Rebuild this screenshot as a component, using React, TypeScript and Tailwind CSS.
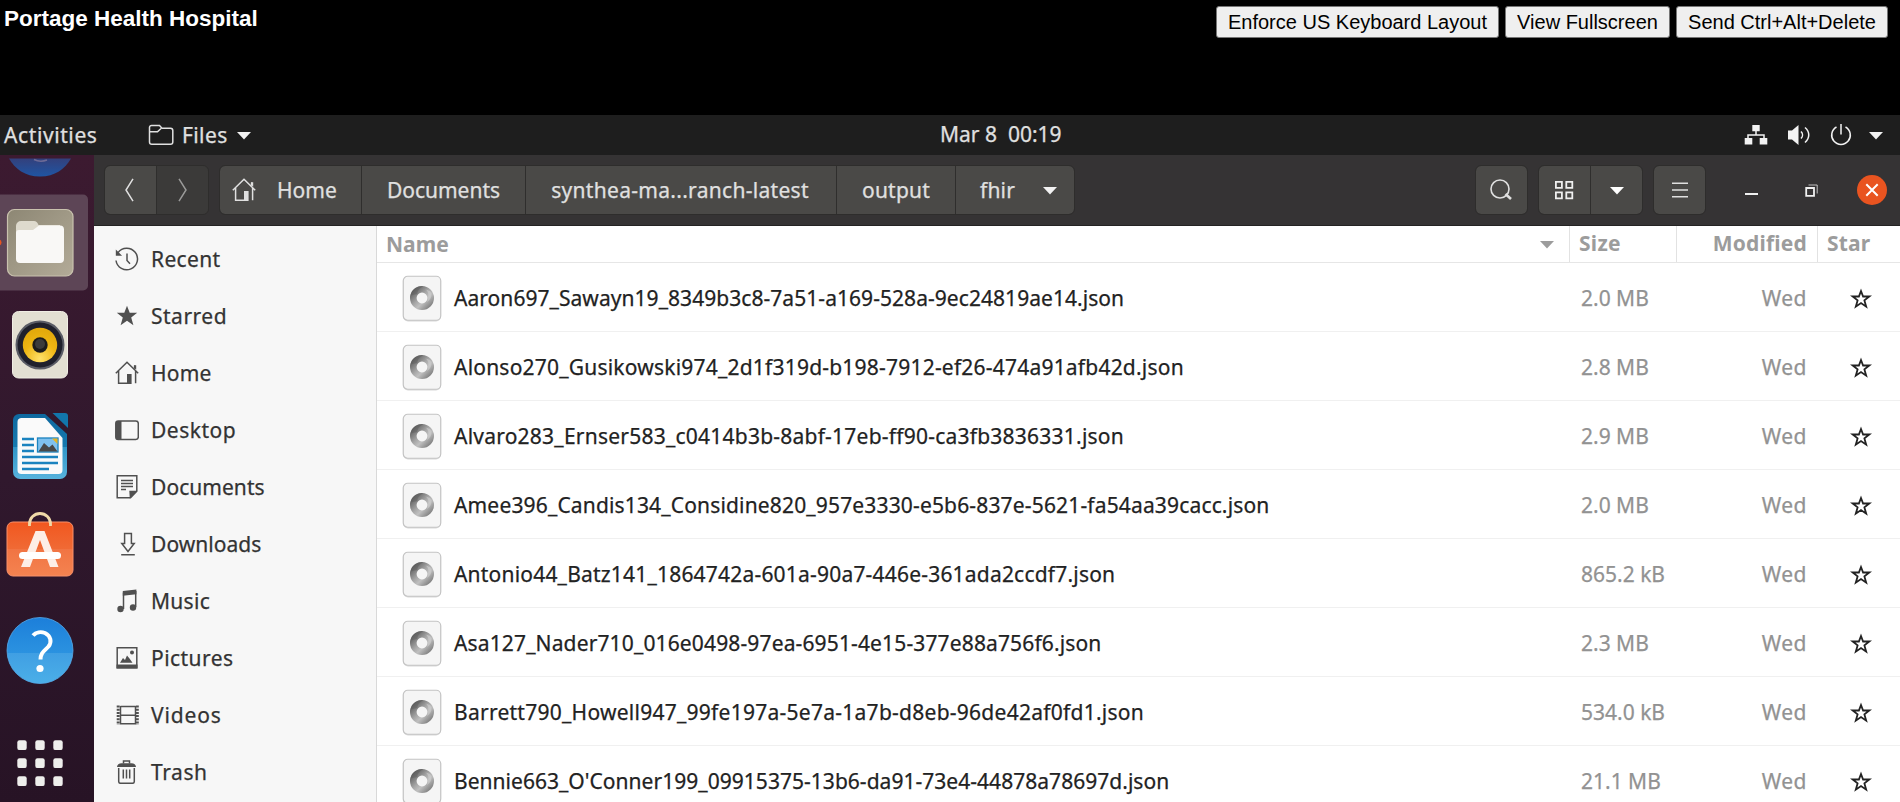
import React from "react";

const files = [
  { name: "Aaron697_Sawayn19_8349b3c8-7a51-a169-528a-9ec24819ae14.json", size: "2.0 MB", track: "tracking-[0.05px]" },
  { name: "Alonso270_Gusikowski974_2d1f319d-b198-7912-ef26-474a91afb42d.json", size: "2.8 MB", track: "tracking-[0.21px]" },
  { name: "Alvaro283_Ernser583_c0414b3b-8abf-17eb-ff90-ca3fb3836331.json", size: "2.9 MB", track: "tracking-[0.23px]" },
  { name: "Amee396_Candis134_Considine820_957e3330-e5b6-837e-5621-fa54aa39cacc.json", size: "2.0 MB", track: "tracking-[0.16px]" },
  { name: "Antonio44_Batz141_1864742a-601a-90a7-446e-361ada2ccdf7.json", size: "865.2 kB", track: "tracking-[0.2px]" },
  { name: "Asa127_Nader710_016e0498-97ea-6951-4e15-377e88a756f6.json", size: "2.3 MB", track: "tracking-[0.14px]" },
  { name: "Barrett790_Howell947_99fe197a-5e7a-1a7b-d8eb-96de42af0fd1.json", size: "534.0 kB", track: "tracking-[0.26px]" },
  { name: "Bennie663_O'Conner199_09915375-13b6-da91-73e4-44878a78697d.json", size: "21.1 MB", track: "tracking-[0.03px]" },
];

const Caret = ({ className = "" }: { className?: string }) => (
  <svg width="16" height="9" viewBox="0 0 16 9" className={className}>
    <path d="M1 1h14L8 8.4z" fill="currentColor" />
  </svg>
);

const HomeIcon = () => (
  <svg width="24" height="24" viewBox="0 0 24 24" fill="none" stroke="currentColor" strokeWidth="1.5">
    <path d="M.8 12.2 12 1.2l11.2 11M3.6 10v12.3h10M20.6 9.8v12.4M19.6 4.5v3" />
    <path d="M12 13h4.6v10H12z" fill="currentColor" stroke="none" />
    <path d="M19 4.2h2.2v4.6L19 6.8z" fill="currentColor" stroke="none" />
  </svg>
);

const places: { label: string; track: string; icon: React.ReactNode }[] = [
  {
    label: "Recent",
    track: "tracking-[0.35px]",
    icon: (
      <svg width="24" height="24" viewBox="0 0 24 24" fill="none" stroke="currentColor" strokeWidth="1.5">
        <path d="M3 5.6A10.8 10.8 0 1 1 1 13.5M12 6.5v7l3 3.2" />
        <path d="M.8 2.5v6.3h6.3z" fill="currentColor" stroke="none" />
      </svg>
    ),
  },
  {
    label: "Starred",
    track: "tracking-[0.5px]",
    icon: (
      <svg width="24" height="24" viewBox="0 0 24 24" fill="currentColor">
        <path d="m12 1.8 2.7 7h7.5l-6 4.700 2.200 7.700L12 16.800l-6.400 4.400 2.200-7.700-6-4.700h7.500z" />
      </svg>
    ),
  },
  { label: "Home", track: "tracking-[0.2px]", icon: <HomeIcon /> },
  {
    label: "Desktop",
    track: "tracking-[0.5px]",
    icon: (
      <svg width="24" height="24" viewBox="0 0 24 24" fill="none" stroke="currentColor" strokeWidth="1.5">
        <rect x=".8" y="3" width="22.5" height="18.5" rx="2.5" />
        <path d="M3 3h3.5v18.5H3A2 2 0 0 1 .8 19.500V5A2 2 0 0 1 3 3z" fill="currentColor" stroke="none" />
      </svg>
    ),
  },
  {
    label: "Documents",
    track: "tracking-[0.05px]",
    icon: (
      <svg width="24" height="24" viewBox="0 0 24 24" fill="none" stroke="currentColor" strokeWidth="1.5">
        <path d="M2.200 .8h19.600v15.500l-6.300 6.500H2.200zM6 5.500h12M6 8.500h12M6 11.500h12M6 14.500h5" />
        <path d="M14.300 15.800h8l-7.500 7.700z" fill="currentColor" stroke="none" />
      </svg>
    ),
  },
  {
    label: "Downloads",
    track: "tracking-[0.05px]",
    icon: (
      <svg width="24" height="24" viewBox="0 0 24 24" fill="none" stroke="currentColor" strokeWidth="1.5">
        <path d="M9.600 1.500h6.800v10h2.800L13 19.500l-6.200-8h2.800zM6.200 22.800h13.600" />
      </svg>
    ),
  },
  {
    label: "Music",
    track: "tracking-[0.3px]",
    icon: (
      <svg width="24" height="24" viewBox="0 0 24 24" fill="none" stroke="currentColor" strokeWidth="1.5">
        <path d="M8.500 20V3.500M20.700 18V2" />
        <path d="M7.800 2 21.400.5v4.800L7.800 6.800z" fill="currentColor" stroke="none" />
        <circle cx="5.500" cy="20" r="3.200" fill="currentColor" stroke="none" />
        <circle cx="18" cy="18.500" r="3.200" fill="currentColor" stroke="none" />
      </svg>
    ),
  },
  {
    label: "Pictures",
    track: "tracking-[0.45px]",
    icon: (
      <svg width="24" height="24" viewBox="0 0 24 24" fill="none" stroke="currentColor" strokeWidth="1.5">
        <path d="M2.200 1.800h19.600v20H2.200z" />
        <path d="M1.500 18.500h21v4h-21zM5 16.800l3-4.800 2 2 2-4.500 2.500 3 3 4.300z" fill="currentColor" stroke="none" />
        <circle cx="17" cy="6.500" r="2" fill="currentColor" stroke="none" />
      </svg>
    ),
  },
  {
    label: "Videos",
    track: "tracking-[0.85px]",
    icon: (
      <svg width="24" height="24" viewBox="0 0 24 24" fill="none" stroke="currentColor" strokeWidth="1.5">
        <path d="M5.500 3v18.500M20.500 3v18.500M5.500 3.500h15M5.500 12.300h15M5.500 20.800h15" />
        <path d="M3.200 2.500v19.500M22.300 2.500v19.500" strokeDasharray="2 1.200" strokeWidth="3" />
      </svg>
    ),
  },
  {
    label: "Trash",
    track: "tracking-[0.6px]",
    icon: (
      <svg width="24" height="24" viewBox="0 0 24 24" fill="none" stroke="currentColor" strokeWidth="1.5">
        <path d="M3.700 8v13.500a1.800 1.800 0 0 0 1.800 1.800h12a1.800 1.800 0 0 0 1.800-1.800V8M8.300 9.500v9M11.500 9.500v9M14.700 9.500v9" />
        <path d="M8.500 3.500V1h6v2.500" />
        <path d="M2 7c0-2.500 2-3.800 4.500-3.800h10C19 3.200 21 4.500 21 7z" fill="currentColor" stroke="none" />
      </svg>
    ),
  },
];

const JsonIcon = () => (
  <svg width="40" height="48" viewBox="0 0 40 48">
    <defs>
      <linearGradient id="ringA" x1="0" y1="0" x2="1" y2="1">
        <stop offset="0" stopColor="#5c5c5c" />
        <stop offset=".45" stopColor="#a8a8a8" />
        <stop offset=".65" stopColor="#c0c0c0" />
        <stop offset="1" stopColor="#808080" />
      </linearGradient>
    </defs>
    <rect x="1" y="2" width="38" height="44.5" rx="5" fill="#d8d8d8" />
    <rect x="1.250" y="1.250" width="37.5" height="44" rx="4.5" fill="#f5f5f5" stroke="#c4c4c4" strokeWidth="1.2" />
    <ellipse cx="20" cy="23" rx="8.700" ry="8.700" fill="none" stroke="url(#ringA)" strokeWidth="6.600" />
    <path d="M8.200 20.500a12 12 0 0 1 13-9.300c-3.500 1.500-6 4.500-5.800 7.800z" fill="#5e5e5e" opacity=".5" />
    <path d="M22 14c4 1 6 5 3 13 4-2 6-8 3-11z" fill="#d0d0d0" opacity=".6" />
  </svg>
);

const Sep = () => <div className="w-px bg-[#2f2e2d]" />;

export default function App() {
  return (
    <div className="flex h-[802px] w-[1900px] flex-col overflow-hidden bg-black font-['Noto_Sans',sans-serif]">
      <header className="flex h-[115px] shrink-0 items-start justify-between pt-1.5 pr-3 pl-1 font-['Liberation_Sans',Arial,sans-serif]">
        <h1 className="text-[22.5px] leading-[26px] font-bold whitespace-nowrap text-white">Portage Health Hospital</h1>
        <div className="flex gap-[6px] text-[20px] leading-none text-black">
          <button className="h-8 w-[283px] rounded-[3px] border border-[#767676] bg-[#efefef] whitespace-nowrap">Enforce US Keyboard Layout</button>
          <button className="h-8 w-[165px] rounded-[3px] border border-[#767676] bg-[#efefef] whitespace-nowrap">View Fullscreen</button>
          <button className="h-8 w-[212px] rounded-[3px] border border-[#767676] bg-[#efefef] whitespace-nowrap">Send Ctrl+Alt+Delete</button>
        </div>
      </header>

      <nav className="flex h-10 shrink-0 items-center bg-[#1e1e1e] pl-1 text-[21px] text-[#e0e0e0] [-webkit-text-stroke:0.25px]">
        <div className="flex w-[936px] items-center">
          <span className="w-[144px] pt-0.5 tracking-[0.6px]">Activities</span>
          <svg width="26" height="22" viewBox="0 0 26 22" fill="none" stroke="currentColor" strokeWidth="1.5">
            <path d="M1.500 18V3.500a2 2 0 0 1 2-2h8l2.500 2.700h8.500a2.300 2.300 0 0 1 2.300 2.300V18a2.300 2.300 0 0 1-2.300 2.300H3.800A2.300 2.300 0 0 1 1.500 18zM1.500 7.800h8L13 4.500" />
          </svg>
          <span className="w-[62px] pt-0.5 pl-[8px] tracking-[0.4px]">Files</span>
          <Caret className="text-[#f2f2f2]" />
        </div>
        <span className="whitespace-pre">Mar 8  00:19</span>
        <div className="flex flex-1 items-center justify-end pr-4 text-[#f2f2f2]">
          <svg width="24" height="22" viewBox="0 0 24 22" fill="none" stroke="currentColor" strokeWidth="1.5">
            <path d="M12 6v5M4 15v-4h16v4" />
            <path d="M8.300 1h7.400v6.300H8.300zM.7 14h7.600v6.500H.7zM15.700 14h7.600v6.500h-7.600z" fill="currentColor" stroke="none" />
          </svg>
          <svg width="24" height="22" viewBox="0 0 24 22" fill="none" stroke="currentColor" strokeWidth="1.5" className="ml-[19px]">
            <path d="M1 6.500h4L11.500 1v20L5 15.500H1z" fill="currentColor" stroke="none" />
            <path d="M14 7.500c2 2 2 5 0 7M18 3.500c5 4.500 5 10.500 0 15" />
          </svg>
          <svg width="22" height="22" viewBox="0 0 22 22" fill="none" stroke="currentColor" strokeWidth="1.5" className="ml-[19px]">
            <path d="M11 0v10.500M6.500 3a9.300 9.300 0 1 0 9 0" />
          </svg>
          <Caret className="ml-[16px]" />
        </div>
      </nav>

      <div className="flex min-h-0 flex-1">
        <aside className="flex w-[94px] shrink-0 flex-col bg-linear-to-b from-[#3c1a30] via-[#30182d] to-[#271325]">
          <svg width="94" height="647" viewBox="0 0 94 647">
            <defs>
              <linearGradient id="fox" x1="0" y1="0" x2="0" y2="1"><stop offset="0" stopColor="#33407c" /><stop offset="1" stopColor="#1f55a3" /></linearGradient>
              <linearGradient id="tan" x1="0" y1="0" x2="1" y2="1"><stop offset="0" stopColor="#8d8774" /><stop offset="1" stopColor="#b3ab98" /></linearGradient>
              <radialGradient id="cone" cx=".5" cy=".9" r=".8"><stop offset="0" stopColor="#ffe169" /><stop offset=".6" stopColor="#eeb613" /><stop offset="1" stopColor="#e3aa0c" /></radialGradient>
              <linearGradient id="page" x1="0" y1="0" x2="0" y2="1"><stop offset="0" stopColor="#0e689f" /><stop offset=".5" stopColor="#1679ae" /><stop offset=".5" stopColor="#2f94c6" /><stop offset="1" stopColor="#57b3dd" /></linearGradient>
              <linearGradient id="bag" x1="0" y1="0" x2="0" y2="1"><stop offset="0" stopColor="#f1571f" /><stop offset=".5" stopColor="#f06a35" /><stop offset=".5" stopColor="#f17443" /><stop offset="1" stopColor="#f48350" /></linearGradient>
              <linearGradient id="help" x1="0" y1="0" x2="0" y2="1"><stop offset="0" stopColor="#1c7fda" /><stop offset=".54" stopColor="#2b92e0" /><stop offset=".54" stopColor="#409fe3" /><stop offset="1" stopColor="#4bafe8" /></linearGradient>
            </defs>
            <path d="M9 3.500h62C65 14 55 21.500 40 21.500S15 14 9 3.500z" fill="url(#fox)" />
            <path d="M34 4.500c5 2.500 9 2 13 .5" stroke="#6d6a96" strokeWidth="1.5" fill="none" />
            <path d="M0 39.500h83a5 5 0 0 1 5 5v86a5 5 0 0 1-5 5H0z" fill="#5d4556" />
            <circle cx="-1.500" cy="87.500" r="3" fill="#e95420" />
            <rect x="7.500" y="54.500" width="65.500" height="66.500" rx="7" fill="url(#tan)" stroke="#c9c2ae" strokeWidth="1.2" />
            <path d="M16 71a5 5 0 0 1 5-5h13q3 0 4.500 4H60v10H16z" fill="#dedacd" />
            <path d="M16 78q0-3 3-3h14l6-4.500h21a4 4 0 0 1 4 4V104a4 4 0 0 1-4 4H20a4 4 0 0 1-4-4z" fill="#f9f8f6" />
            <rect x="12.500" y="156.500" width="55" height="66.500" rx="6" fill="#e3dfd2" stroke="#f0ede4" />
            <circle cx="40" cy="190" r="24.500" fill="#5a5c66" />
            <circle cx="40" cy="190" r="22.500" fill="#1f202c" />
            <circle cx="40" cy="190" r="17.200" fill="url(#cone)" />
            <circle cx="40" cy="190" r="7.700" fill="#1c1c1c" />
            <circle cx="40" cy="189" r="5" fill="#3b3b3b" />
            <path d="M19 259h26l22 20v38a7 7 0 0 1-7 7H20a7 7 0 0 1-7-7v-52a6 6 0 0 1 6-6z" fill="url(#page)" />
            <path d="M52.500 258H65a3 3 0 0 1 3 3v12z" fill="#1276ab" />
            <path d="M21 263h24l17.500 20v32a4 4 0 0 1-4 4H21.500a4 4 0 0 1-4-4v-48a4 4 0 0 1 3.500-4z" fill="#fafafa" />
            <path d="M22 284h12M22 290h12M22 296h12M22 302h36M22 308h36M22 314h27" stroke="#1b83bf" strokeWidth="2.5" />
            <rect x="37.500" y="283" width="20.500" height="14" fill="#7fc1ee" stroke="#1b83bf" strokeWidth="1.3" />
            <path d="M52 283.500h5.500v5.500z" fill="#e6b422" />
            <path d="M38.500 296.500l5.500-8.500 5 4.500 3.500-3 5 7z" fill="#484848" />
            <rect x="7" y="367" width="66" height="54" rx="6" fill="url(#bag)" stroke="#f8906a" strokeWidth="1" />
            <path d="M29.500 371v-2a10.500 10.500 0 0 1 21 0v2" fill="none" stroke="#f0d9a8" strokeWidth="2.8" />
            <path d="M35.500 376h9L58.500 412H50L40 385l-10 27H21z" fill="#fdeee6" />
            <rect x="19" y="397" width="42" height="7" rx="3.5" fill="#fff" />
            <circle cx="40" cy="495.500" r="33" fill="url(#help)" stroke="#55a9ea" strokeWidth=".8" />
            <path d="M33 480.500c3-3.500 8-4 12-2.500 6 3 7 9 3.500 13.500-4 4.500-8 6-8 13" fill="none" stroke="#fff" strokeWidth="4" />
            <circle cx="40" cy="513.500" r="3.600" fill="#fff" />
            <g fill="#eeeeec">
              {[0, 1, 2].map((r) => [0, 1, 2].map((c) => <rect key={`${r}${c}`} x={17.3 + c * 18} y={585.3 + r * 18} width="9.400" height="9.800" rx="2.200" />))}
            </g>
          </svg>
        </aside>

        <main className="flex min-w-0 flex-1 flex-col">
          <div className="flex h-[71px] shrink-0 items-start border-b border-[#242323] bg-[#353334] pt-[11px] pl-[11px] text-[21px] text-[#e0e0e0] [-webkit-text-stroke:0.25px]">
            <div className="flex h-[48px] overflow-hidden rounded-[5px] bg-[#4a4947] outline outline-[#2e2d2c]">
              <div className="flex w-[51px] items-center justify-center pr-0.5">
                <svg width="12" height="24" viewBox="0 0 12 24" fill="none" stroke="currentColor" strokeWidth="1.5"><path d="M9 .8 2 12l7 11.200" /></svg>
              </div>
              <Sep />
              <div className="flex w-[51px] items-center justify-center bg-[#3b3a39] text-[#9a9a99]">
                <svg width="12" height="24" viewBox="0 0 12 24" fill="none" stroke="currentColor" strokeWidth="1.5"><path d="m2 .8 7 11.200L2 23.200" /></svg>
              </div>
            </div>
            <div className="ml-3 flex h-[48px] overflow-hidden rounded-[5px] bg-[#4a4947] outline outline-[#2e2d2c]">
              <div className="flex w-[141px] items-center pl-3"><HomeIcon /><span className="ml-[21px] pt-0.5">Home</span></div>
              <Sep />
              <div className="flex w-[163px] items-center justify-center pt-0.5">Documents</div>
              <Sep />
              <div className="flex w-[310px] items-center justify-center pt-0.5 pr-0.5 tracking-[0.3px]">synthea-ma...ranch-latest</div>
              <Sep />
              <div className="flex w-[118px] items-center justify-center pt-0.5 tracking-[0.2px]">output</div>
              <Sep />
              <div className="flex w-[118px] items-center pl-6 tracking-[0.2px]"><span className="pt-0.5">fhir</span><Caret className="mr-4 ml-auto text-[#f2f2f2]" /></div>
            </div>
            <div className="ml-auto flex h-[48px] w-[51px] items-center justify-center rounded-[5px] bg-[#4a4947] pr-0.5 outline outline-[#2e2d2c]">
              <svg width="24" height="24" viewBox="0 0 24 24" fill="none" stroke="currentColor" strokeWidth="1.6"><circle cx="11" cy="11" r="9" /><path d="m16.500 16 5.500 5" strokeWidth="2.6" /></svg>
            </div>
            <div className="ml-3 flex h-[48px] overflow-hidden rounded-[5px] bg-[#4a4947] outline outline-[#2e2d2c]">
              <div className="flex w-[51px] items-center justify-center pr-0.5 text-[#f0f0f0]">
                <svg width="20" height="20" viewBox="0 0 20 20" fill="none" stroke="currentColor" strokeWidth="1.8"><path d="M1.900 1.900h6v6h-6zM12.300 1.900h6v6h-6zM1.900 12.300h6v6h-6zM12.300 12.300h6v6h-6z" /></svg>
              </div>
              <Sep />
              <div className="flex w-[51px] items-center justify-center"><Caret className="text-white" /></div>
            </div>
            <div className="ml-3 flex h-[48px] w-[51px] items-center justify-center rounded-[5px] bg-[#4a4947] outline outline-[#2e2d2c]">
              <svg width="16" height="16" viewBox="0 0 16 16" stroke="currentColor" strokeWidth="1.5"><path d="M0 1.200h16M0 8h16M0 14.800h16" /></svg>
            </div>
            <div className="flex h-[48px] w-[195px] items-center">
              <svg width="13" height="2" viewBox="0 0 13 2" className="mt-[7px] ml-[40px] text-[#f0f0f0]"><path d="M0 0h13v2H0z" fill="currentColor" /></svg>
              <svg width="13" height="13" viewBox="0 0 13 13" fill="none" stroke="#f0f0f0" className="ml-[47px]"><path d="M1.200 4h7.800v7.800H1.200z" strokeWidth="1.8" /><path d="M3.500 1h8.700v8.500" strokeWidth="1" opacity=".75" /></svg>
              <svg width="30" height="30" viewBox="0 0 30 30" className="ml-[39px]"><circle cx="15" cy="15" r="15" fill="#e95420" /><path d="m9.300 9.300 11.400 11.400M20.700 9.300 9.300 20.700" stroke="#fff" strokeWidth="2" /></svg>
            </div>
          </div>

          <div className="flex min-h-0 flex-1 overflow-hidden">
            <div className="w-[283px] shrink-0 border-r border-[#d9d9d9] bg-[#f7f7f7] pt-1 text-[21px] text-[#333] [-webkit-text-stroke:0.25px]">
              {places.map((p) => (
                <div key={p.label} className="flex h-[57px] items-center gap-3 pl-[21px]">
                  <span className="text-[#505050]">{p.icon}</span>
                  <span className={`pt-0.5 ${p.track}`}>{p.label}</span>
                </div>
              ))}
            </div>

            <div className="flex min-w-0 flex-1 flex-col bg-white">
              <div className="flex h-[37px] shrink-0 border-b border-[#e6e6e6] text-[21px] leading-[34px] font-bold text-[#9c9c9c]">
                <div className="flex flex-1 items-center justify-between pr-[14px] pl-[9px]"><span>Name</span><Caret /></div>
                <div className="w-[107px] border-l border-[#e2e2e2] pl-[9px] tracking-[0.3px]">Size</div>
                <div className="w-[141px] border-l border-[#e2e2e2] pr-[10px] text-right tracking-[0.2px]">Modified</div>
                <div className="w-[83px] border-l border-[#e2e2e2] pl-[9px] tracking-[0.2px]">Star</div>
              </div>
              {files.map((f) => (
                <div key={f.name} className="flex h-[69px] shrink-0 items-center border-b border-[#f0f0f0] pt-[3px] text-[21px] whitespace-nowrap [-webkit-text-stroke:0.25px]">
                  <div className="flex flex-1 items-center gap-3 pl-[25px] text-[#222]"><JsonIcon /><span className={f.track}>{f.name}</span></div>
                  <div className="w-[105px] text-[#929292]">{f.size}</div>
                  <div className="w-[121px] text-right tracking-[0.5px] text-[#929292]">Wed</div>
                  <div className="flex w-[93px] justify-center pl-[15px]">
                    <svg width="22" height="22" viewBox="0 0 22 22" fill="none" stroke="#222" strokeWidth="1.8"><path d="m11 3 2.100 5.500h6.300l-5 3.900 1.800 6.300-5.200-3.600-5.200 3.600 1.800-6.300-5-3.900h6.300z" /></svg>
                  </div>
                </div>
              ))}
            </div>
          </div>
        </main>
      </div>
    </div>
  );
}
